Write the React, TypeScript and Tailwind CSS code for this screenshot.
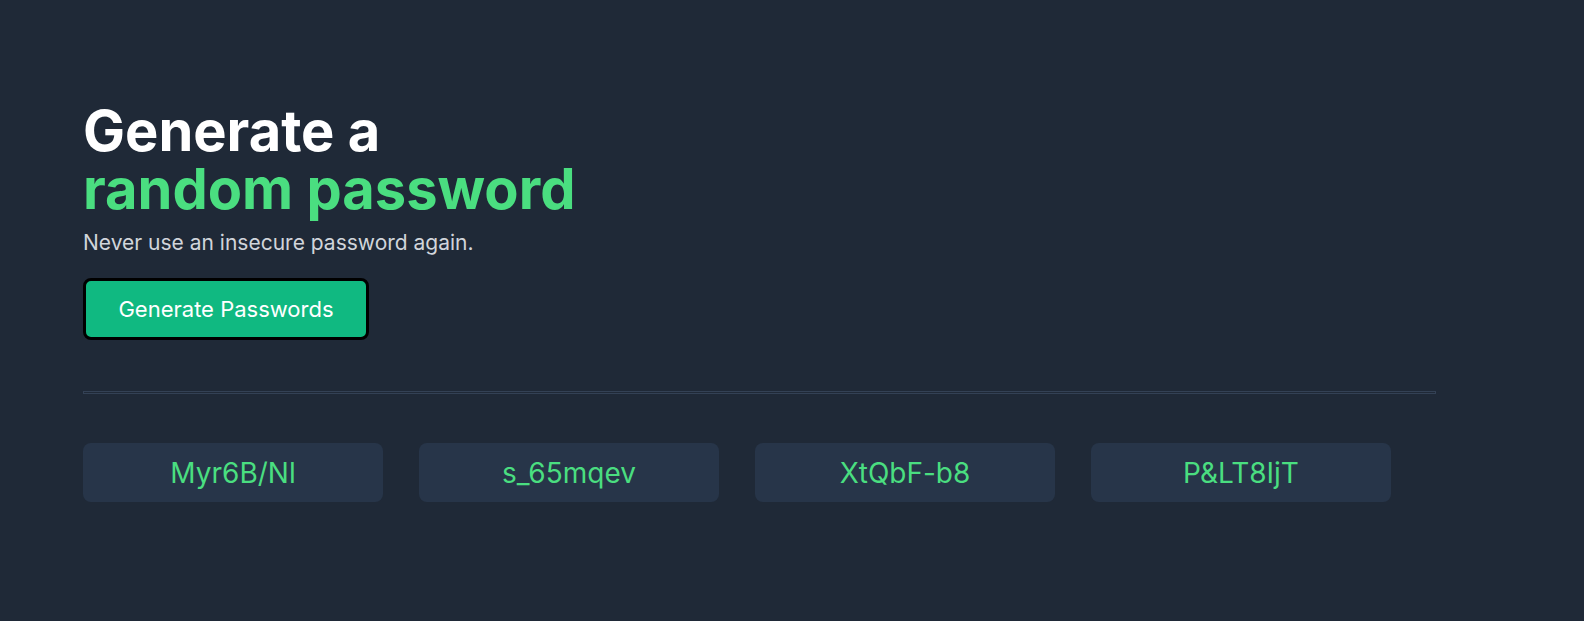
export default function App() {
  const passwords = ["Myr6B/Nl", "s_65mqev", "XtQbF-b8", "P&LT8IjT"];
  return (
    <div
      className="min-h-[621px] w-full bg-[#1f2937] pl-[83px] pt-[102px]"
      style={{ fontFamily: "Inter, 'Noto Sans', sans-serif" }}
    >
      <h1 className="text-[56px] font-bold leading-[58px] text-white">
        Generate a
        <br />
        <span className="text-[#4ade80]">random password</span>
      </h1>
      <p className="mt-[11px] text-[21px] leading-[28px] text-[#d1d5db]">
        Never use an insecure password again.
      </p>
      <button className="mt-[21px] flex h-[62px] w-[286px] items-center justify-center rounded-[8px] border-[3px] border-black bg-[#10b981] text-[22px] text-white">
        Generate Passwords
      </button>
      <div className="mt-[51px] h-[3px] w-[1353px] border border-[#334155]" />
      <div className="mt-[49px] flex gap-[36px]">
        {passwords.map((p) => (
          <div
            key={p}
            className="flex h-[59px] w-[300px] items-center justify-center rounded-[8px] bg-[#273549] text-[28px] text-[#4ade80]"
          >
            {p}
          </div>
        ))}
      </div>
    </div>
  );
}
